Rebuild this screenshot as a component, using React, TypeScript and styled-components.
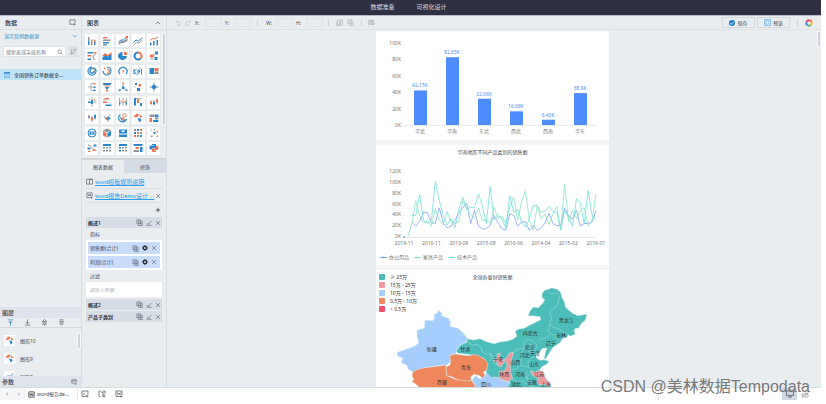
import React, { useState } from "react";
import styled, { createGlobalStyle } from "styled-components";

const BLUE = "#2b86cc";
const ORANGE = "#ee7553";
const GREY = "#8d949b";
const INK = "#5b606b";

const GlobalStyle = createGlobalStyle`
  * { box-sizing: border-box; }
  body {
    margin: 0;
    background: #fff;
    color: #444a54;
    font: 5px/8px "Noto Sans", "Noto Sans CJK SC", sans-serif;
  }
  button, input { font: inherit; color: inherit; }
  button { border: 0; padding: 0; background: none; cursor: pointer; }
  ul, h2, h3, figure { margin: 0; padding: 0; list-style: none; font-size: inherit; font-weight: 400; }
  svg { flex: none; }
`;

const Shell = styled.div`
  position: relative;
  display: flex;
  flex-direction: column;
  height: 100vh;
  margin-right: 5px;
`;

const TopNav = styled.nav`
  display: flex;
  justify-content: center;
  gap: 22px;
  flex: 0 0 15px;
  background: #2f3142;
  padding-right: 4px;
`;

const TopLink = styled.a`
  color: #d9dae2;
  font-size: 6px;
  line-height: 15px;
  text-decoration: none;
`;

const Body = styled.div`
  display: flex;
  flex: 1;
  min-height: 0;
  background: #e9edf0;
`;

const Side = styled.aside<{ $width: number }>`
  position: relative;
  display: flex;
  flex-direction: column;
  flex: 0 0 ${(p) => p.$width}px;
  min-width: 0;
  border-right: 1px solid #dadfe5;
  border-top: 1px solid #b9bac6;
`;

const PanelHead = styled.header`
  display: flex;
  align-items: center;
  justify-content: space-between;
  flex: 0 0 14px;
  padding: 0 5px;
  border-bottom: 1px solid #dadfe5;
  color: #33373f;
`;

const PanelTitle = styled.h2`
  font-size: 6px;
  line-height: 8px;
  font-weight: 500;
`;

const SourceButton = styled.button`
  display: flex;
  align-items: center;
  justify-content: space-between;
  height: 12px;
  padding: 0 3px 0 4px;
  color: #2f8fc9;
`;

const SearchRow = styled.div`
  display: flex;
  gap: 2px;
  margin: 4px 3px 0;
  height: 11px;
`;

const SearchBox = styled.label`
  display: flex;
  align-items: center;
  flex: 1;
  min-width: 0;
  padding: 0 2px;
  background: #fff;
  border: 1px solid #e0e4e8;
`;

const SearchInput = styled.input`
  flex: 1;
  width: 0;
  padding: 0;
  border: 0;
  outline: 0;
  background: none;
  &::placeholder { color: #6d727b; opacity: 1; }
`;

const IconButton = styled.button<{ $w?: number; $h?: number; $bg?: string; $tone?: string }>`
  display: flex;
  align-items: center;
  justify-content: center;
  flex: none;
  width: ${(p) => p.$w ?? 8}px;
  height: ${(p) => p.$h ?? 8}px;
  background: ${(p) => p.$bg ?? "none"};
  color: ${(p) => p.$tone ?? INK};
`;

const TreeItem = styled.button`
  display: flex;
  align-items: center;
  gap: 4px;
  height: 11px;
  margin-top: 12px;
  padding: 0 4px;
  background: #bfe3f8;
  color: #262b33;
  white-space: nowrap;
`;

const Spacer = styled.div`
  flex: 1;
`;

const SubHead = styled.header`
  display: flex;
  align-items: center;
  justify-content: space-between;
  flex: 0 0 11px;
  padding: 0 3px 0 2px;
  background: #dfe3eb;
`;

const LayerTools = styled.div`
  display: flex;
  align-items: center;
  flex: 0 0 10px;
  gap: 9px;
  padding: 0 6px;
  border-bottom: 1px solid #d3d9e0;
`;

const LayerList = styled.ul`
  display: flex;
  flex-direction: column;
  gap: 7px;
  height: 48px;
  padding: 7px 4px 0;
  overflow: hidden;
`;

const LayerItem = styled.li`
  display: flex;
  align-items: center;
  flex: 0 0 11px;
  gap: 5px;
`;

const LayerThumb = styled.span`
  display: flex;
  align-items: center;
  justify-content: center;
  width: 11px;
  height: 11px;
  background: #fff;
`;

const ScrollThumb = styled.span<{ $top?: number; $bottom?: number; $height: number }>`
  position: absolute;
  right: 1px;
  ${(p) => (p.$bottom !== undefined ? `bottom: ${p.$bottom}px;` : `top: ${p.$top}px;`)}
  width: 2px;
  height: ${(p) => p.$height}px;
  background: #cfd2d6;
  outline: 1px solid #f6f7f8;
`;

const ChartGrid = styled.div`
  display: grid;
  grid-template-columns: repeat(5, 13px);
  grid-auto-rows: 13px;
  justify-content: space-between;
  align-content: space-between;
  height: 121px;
  margin: 4px 6px 3px 3px;
`;

const ChartTile = styled.button`
  display: flex;
  align-items: center;
  justify-content: center;
  background: #fff;
`;

const Tabs = styled.div`
  display: grid;
  grid-template-columns: 1fr 1fr;
  flex: 0 0 15px;
  border-top: 2px solid #d3d4d5;
`;

const Tab = styled.button<{ $active: boolean }>`
  background: ${(p) => (p.$active ? "#e9edf0" : "#d5dce4")};
`;

const Fields = styled.div`
  display: flex;
  flex-direction: column;
  padding: 2px 4px 0;
`;

const LinkRow = styled.div`
  display: flex;
  align-items: center;
  gap: 2px;
  height: 14px;
  border-bottom: 1px solid #d9dee3;
`;

const DocLink = styled.a`
  flex: 1;
  min-width: 0;
  color: #2f9ce8;
  font-family: Roboto, "Noto Sans CJK SC", sans-serif;
  font-size: 6px;
  white-space: nowrap;
`;

const AddRow = styled.div`
  display: flex;
  justify-content: flex-end;
  align-items: center;
  height: 14px;
`;

const GroupHead = styled.div`
  display: flex;
  align-items: center;
  height: 11px;
  padding-left: 2px;
  background: #d7dde5;
  color: #33373f;
  font-weight: 600;
  & + & { margin-top: 1px; }
`;

const GroupName = styled.span`
  flex: 1;
`;

const FieldLabel = styled.div`
  height: 12px;
  padding-left: 4px;
  line-height: 12px;
`;

const FieldBox = styled.div`
  display: flex;
  flex-direction: column;
  gap: 2px;
  padding: 2px;
  background: #fff;
`;

const FieldChip = styled.div`
  display: flex;
  align-items: center;
  height: 12px;
  padding: 0 2px;
  background: #c9dcfb;
`;

const FilterInput = styled.input`
  width: 100%;
  height: 15px;
  margin-bottom: 2px;
  padding: 0 3px;
  border: 0;
  background: #fff;
  &::placeholder { color: #b4b8bf; opacity: 1; font-style: italic; }
`;

const Workspace = styled.section`
  display: flex;
  flex-direction: column;
  flex: 1;
  min-width: 0;
  border-top: 1px solid #b9bac6;
`;

const Toolbar = styled.div`
  display: flex;
  align-items: center;
  flex: 0 0 14px;
  padding: 0 8px 0 5px;
  border-bottom: 1px solid #dde2e6;
`;

const SizeField = styled.label`
  display: flex;
  align-items: center;
  justify-content: space-between;
  width: 27px;
  margin-left: 3px;
`;

const SizeInput = styled.input`
  width: 17px;
  height: 9px;
  padding: 0;
  border: 1px solid #e0e4e8;
  background: none;
`;

const Divider = styled.span<{ $gap: number }>`
  width: 1px;
  height: 6px;
  margin: 0 ${(p) => p.$gap}px;
  background: #cfd4da;
`;

const ActionButton = styled.button`
  display: flex;
  align-items: center;
  justify-content: center;
  gap: 2px;
  width: 33px;
  height: 11px;
  margin-left: 2px;
  border: 1px solid #d5dae0;
`;

const Canvas = styled.main`
  position: relative;
  display: flex;
  justify-content: center;
  flex: 1;
  min-height: 0;
  overflow: hidden;
  padding: 1px 3px 0 0;
`;

const Report = styled.div`
  display: flex;
  flex-direction: column;
  gap: 5px;
  width: 100%;
  max-width: 233px;
  height: max-content;
  background: #f2f4f6;
`;

const Card = styled.figure`
  position: relative;
  background: #fff;
`;

const CardTitle = styled.h3`
  padding-top: 3px;
  text-align: center;
  line-height: 8px;
`;

const Drawing = styled.svg`
  display: block;
  width: 100%;
`;

const SeriesLegend = styled.ul`
  display: flex;
  gap: 5px;
  height: 16px;
  padding: 4px 4px;
  color: #777;
`;

const SeriesItem = styled.li`
  display: flex;
  align-items: center;
  gap: 2px;
`;

const RangeLegend = styled.ul`
  position: absolute;
  top: 3px;
  left: 3px;
`;

const RangeItem = styled.li<{ $color: string }>`
  display: flex;
  align-items: center;
  gap: 5px;
  height: 8px;
  color: #333;
  &::before {
    content: "";
    width: 6px;
    height: 6px;
    border-radius: 1px;
    background: ${(p) => p.$color};
  }
`;

const Footer = styled.footer`
  display: flex;
  flex: 0 0 17px;
  padding: 0 8px 4px 0;
  border-top: 1px solid #d9dde2;
  background: #fff;
`;

const Pager = styled.div`
  display: flex;
  align-items: center;
  gap: 4px;
  width: 26px;
  padding-left: 3px;
  background: #f5f6f7;
`;

const SheetTab = styled.button`
  display: flex;
  align-items: center;
  gap: 2px;
  width: 52px;
  padding-left: 2px;
  border-right: 1px solid #e2e5e9;
  white-space: nowrap;
`;

const SheetTools = styled.div`
  display: flex;
  align-items: center;
  flex: 1;
  gap: 9px;
  padding-left: 3px;
`;

const DeviceTools = styled.div`
  display: flex;
  justify-content: flex-end;
  width: 155px;
  border-left: 1px solid #e2e5e9;
`;

const Watermark = styled.div`
  position: absolute;
  right: 11px;
  bottom: 7px;
  color: rgba(105, 105, 105, 0.9);
  font: 16px/20px "Liberation Sans", "Noto Sans CJK SC", sans-serif;
  white-space: nowrap;
  pointer-events: none;
`;

/* ---------- small line icons, 16-unit grid ---------- */

const linePaths = {
  addTable: "M2 2h12v7M2 2v10h7M12 9v6M9 12h6",
  down: "M2 5l6 6 6-6",
  up: "M2 11l6-6 6 6",
  search: "M7 2a5 5 0 1 0 0 10a5 5 0 1 0 0-10M11 11l4 4",
  sort: "M4 2v12M1 11l3 3 3-3M8 3h7M8 7h5M8 11h3",
  toTop: "M2 2h12M8 15V5M4 9l4-4 4 4",
  toBottom: "M2 14h12M8 1v10M4 7l4 4 4-4",
  raise: "M8 1L3 6h10zM3 9h10M3 12h10M8 12v3",
  lower: "M3 2h10M3 6h10M4 9h8l-4 5z",
  params: "M14 9V2H2v9h7M2 5h12M12 10v5M9 13h6",
  book: "M8 3v11M8 3H1v11h14V3zM8 3h7",
  doc: "M2 2h12v8M2 2v11h7M5 5l1 4 2-3 2 3 1-4M12 10v5M10 13h5",
  close: "M3 3l10 10M13 3L3 13",
  plus: "M8 2v12M2 8h12",
  copy: "M2 2h8v3M2 2v9h4M6 5h8v10H6zM10 7v6M7 10h6",
  edit: "M3 8l3 4 8-9M1 14h14",
  undo: "M5 2L2 5l3 3M2 5h8a4 4 0 0 1 0 9H5",
  redo: "M11 2l3 3-3 3M14 5H6a4 4 0 0 0 0 9h5",
  pages: "M4 2h11v11H4zM1 5v10h11M7 5h5M7 8h5M7 10h5",
  align: "M2 1v14M5 3h7v3H5zM5 9h10v3H5z",
  prev: "M10 4L5 8l5 4z",
  next: "M6 4l5 4-5 4z",
  word: "M2 2h12v12H2zM4 5l2 6 2-5 2 5 2-6",
  addSheet: "M14 8V2H2v11h7M4 8h4M12 9v6M9 12h6",
  copySheet: "M5 2H2v11h3M10 2h4v6M6 4h4v9M12 9v6M9 12h6",
  desktop: "M1 2h14v9H1zM8 11v3M4 14h8",
  blocks: "M8 2h6v5H8zM2 8h4v6H2zM8 9h6v5H8z",
};

function Line({ name, size = 6, weight = 1.6, fill = "none" }: { name: keyof typeof linePaths; size?: number; weight?: number; fill?: string }) {
  return (
    <svg width={size} height={size} viewBox="0 0 16 16" fill={fill} stroke="currentColor" strokeWidth={weight} aria-hidden="true">
      <path d={linePaths[name]} />
    </svg>
  );
}

const Gear = () => (
  <svg width="6" height="6" viewBox="0 0 16 16" aria-hidden="true">
    <circle cx="8" cy="8" r="4.5" fill="none" stroke="#30343c" strokeWidth="4" />
    <path d="M8 0v3M8 13v3M0 8h3M13 8h3M2.500 2.500l2 2M11.500 11.500l2 2M13.500 2.500l-2 2M4.500 11.500l-2 2" stroke="#30343c" strokeWidth="2" />
  </svg>
);

/* ---------- chart type icons, 20-unit grid ---------- */

type Shape = [color: string, d: string, stroke?: number];

const Globe: Shape[] = [
  ["#d9dcdf", "M10 1a9 9 0 1 0 0 18a9 9 0 1 0 0-18", 1],
  [ORANGE, "M3 5l5-4 4 2-2 4-4 2-4-1zM13 3l5 4-2 3-3-2z"],
  [BLUE, "M9 10l6 1 2 3-4 5-2-4z"],
];

const chartTypes: [string, Shape[]][] = [
  ["堆积柱图", [[GREY, "M2 2h3v7H2zM8 7h3v4H8z"], [ORANGE, "M8 11h3v7H8zM14 7h3v5h-3z"], [BLUE, "M2 9h3v9H2zM14 12h3v6h-3z"]]],
  ["条形图", [[ORANGE, "M2 2h9v3H2z"], [GREY, "M2 7h15v3H2zM2 16h8v3H2z"], [BLUE, "M2 12h12v3H2z"]]],
  ["面积折线图", [[GREY, "M1 14l5-4h5l8-5v5l-8 4H6l-5 4z"], [BLUE, "M1 12l5-4h5l7-6", 2], [ORANGE, "M15 0h5v5h-5z"]]],
  ["折线图", [[BLUE, "M1 13l5-5 5 2 8-7", 2], [GREY, "M1 18l6-5 5 1 7-6", 2]]],
  ["组合图", [[ORANGE, "M2 9l5-4 5 1 6-4", 2], [BLUE, "M2 13h3v6H2zM8 10h3v9H8zM15 8h3v11h-3z"]]],
  ["进度条图", [[BLUE, "M1 2h11v3H1zM1 15h7v3H1z"], [ORANGE, "M13 2h6v3h-6zM1 8h8v3H1z"], [GREY, "M17 6l-5 5 3 7", 2]]],
  ["面积图", [[ORANGE, "M1 9l5-5 6 4 7-6v8H1z"], [BLUE, "M1 12l6-3 5 2 7-4v11H1z"]]],
  ["饼图", [[BLUE, "M9 2v8h9a9 8 0 1 1-9-8z"], [ORANGE, "M12 1a8 8 0 0 1 7 7h-7z"]]],
  ["环形图", [[BLUE, "M10 3a7 7 0 1 0 5 12", 4], [ORANGE, "M10 3a7 7 0 0 1 5 12", 4]]],
  ["和弦图", [[BLUE, "M12 1h6v6h-6zM11 12h6v6h-6z"], [ORANGE, "M2 7h7v6H2z"], [GREY, "M8 9l6-5M9 11l5 4M3 16h5", 2]]],
  ["玫瑰图", [[BLUE, "M10 2a8 8 0 1 0 8 8a6 6 0 0 0-12 0a4 4 0 0 0 8 0", 2.5], [GREY, "M9 4a7 7 0 0 1 5 11", 2]]],
  ["径向图", [[BLUE, "M10 2a8 8 0 1 1-8 8", 2.4], [ORANGE, "M10 6a4 4 0 0 1 0 9M4 4l3 2", 2.4]]],
  ["仪表盘", [[BLUE, "M4 16a8 8 0 1 1 12 0", 2.4], [ORANGE, "M9 13l3-5", 2.4]]],
  ["指标图", [[BLUE, "M2 6v11M7 6l-5 5 5 6M10 17V8h3v4h-3M17 6v11", 2], [ORANGE, "M12 3l3 2", 2]]],
  ["矩形树图", [[BLUE, "M1 4h9v12H1z"], [ORANGE, "M11 4h8v6h-8z"], [GREY, "M11 11h8v5h-8z"]]],
  ["树图", [[GREY, "M2 10h6M8 3v14M8 3h7M8 17h7M8 10h7", 1.4], [ORANGE, "M13 2h4v3h-4z"], [BLUE, "M13 9h4v3h-4zM13 15h4v3h-4z"]]],
  ["漏斗图", [[BLUE, "M1 2h18l-2 4H3zM6 10h8l-2 4H8z"], [ORANGE, "M4 7h12l-1 2H5zM8 15h4v4H8z"]]],
  ["关系图", [[GREY, "M10 3v9M10 12l-7 5M10 12l7 5", 1.4], [BLUE, "M8 9h5v5H8zM1 15h4v3H1zM15 15h4v3h-4z"], [ORANGE, "M9 1h3v3H9z"]]],
  ["散点图", [[ORANGE, "M11 4h5v5h-5z"], [BLUE, "M4 2h4v4H4zM8 12h6v6H8z"], [GREY, "M3 9h2v2H3z"]]],
  ["旭日图", [[BLUE, "M10 4l6 6-6 6-6-6z"], [GREY, "M10 1v3M10 16v3M1 10h3M16 10h3", 2]]],
  ["风向图", [[BLUE, "M8 6h4v8H8zM2 9h6v3H2z"], [GREY, "M10 1v4M10 15v4M13 10h6M4 4h2", 2], [ORANGE, "M13 4h3v3h-3z"]]],
  ["甘特图", [[ORANGE, "M5 2h9v3H5zM2 9h8v3H2z"], [BLUE, "M7 15h12v3H7z"], [GREY, "M2 5h4v2H2z"]]],
  ["平行坐标", [[GREY, "M3 2v16M10 2v16M17 2v16", 1.6], [ORANGE, "M3 7l7 4 7-3", 1.6], [BLUE, "M2 11h3v4H2zM15 10h3v5h-3z"]]],
  ["瀑布图", [[BLUE, "M2 2h4v15H2zM14 12h4v6h-4z"], [ORANGE, "M8 4h4v8H8z"], [GREY, "M6 3h11", 1.4]]],
  ["K线图", [[GREY, "M4 6v10M10 5v13M16 2v12", 1.4], [ORANGE, "M2 9h4v5H2zM14 5h4v6h-4z"], [BLUE, "M8 9h4v6H8z"]]],
  ["箱线图", [[GREY, "M4 3v9M10 6v12M16 2v12", 1.4], [ORANGE, "M8 8h4v7H8z"], [BLUE, "M14 4h4v7h-4z"], [GREY, "M2 5h4v5H2z"]]],
  ["地图热力", [[BLUE, "M2 5l7 5 3-3 6 4-8 4z"], [GREY, "M17 2l-7 8 3 8", 1.6], [ORANGE, "M8 9h3v3H8z"]]],
  ["标记地图", [[BLUE, "M5 3a8 8 0 1 0 12 9M6 8a5 5 0 0 0 8 5", 2.4], [ORANGE, "M13 1a3 3 0 1 0 0 7a3 3 0 1 0 0-7M8 10h4v4H8z", 1.8]]],
  ["区域地图", Globe],
  ["表格树", [[GREY, "M1 3h10v5H1zM12 9h7v4h-7z"], [ORANGE, "M1 10h5v8H1z"], [BLUE, "M12 3h7v5h-7zM8 14h11v4H8z"]]],
  ["词云", [[BLUE, "M10 2a8 8 0 1 0 0 16a8 8 0 1 0 0-16M4 8h12M4 12h12M7 8v5M12 8v5", 2]]],
  ["立方体", [[GREY, "M2 5l8-4 8 4-8 4z"], [ORANGE, "M2 6l7 4v9l-7-4z"], [BLUE, "M18 6l-7 4v9l7-4z"]]],
  ["卡片图", [[BLUE, "M2 3h16v8H2zM2 13h16v5H2z"], ["#ffffff", "M7 5h6v3H7z"]]],
  ["矩阵图", [[GREY, "M2 2h4v4H2zM14 8h4v4h-4zM8 14h4v4H8z"], [BLUE, "M8 2h4v4H8zM2 8h4v4H2zM14 14h4v4h-4z"], [ORANGE, "M14 2h4v4h-4zM8 8h4v4H8zM2 14h4v4H2z"]]],
  ["力导图", [[BLUE, "M9 8h4v4H9zM3 3h2v2H3z"], [GREY, "M4 15h3v3H4zM10 2h2v3h-2z"], [ORANGE, "M15 6h3v3h-3zM15 15h3v3h-3z"]]],
  ["桑基图", [[GREY, "M2 4c8 0 8 10 17 11", 2], [BLUE, "M1 9h6v4H1zM13 3h6v4h-6z"], [ORANGE, "M2 16h5v2H2zM11 13h5v3h-5z"]]],
  ["明细表", [[BLUE, "M2 2h16v4H2z"], [GREY, "M2 8h4v3H2zM8 8h4v3H8zM14 8h4v3h-4zM2 14h4v3H2zM8 14h4v3H8zM14 14h4v3h-4z"]]],
  ["汇总表", [[BLUE, "M2 2h16v4H2zM2 8h4v3H2zM2 14h4v3H2z"], [GREY, "M8 8h4v3H8zM14 8h4v3h-4zM8 14h4v3H8zM14 14h4v3h-4z"]]],
  ["透视表", [[BLUE, "M1 2h18v4H1zM14 8h5v10h-5z"], [ORANGE, "M5 8h7v4H5z"], [GREY, "M1 14h11v4H1z"]]],
  ["Python", [[BLUE, "M6 2h7l1 1v6l-1 1H8l-2 3H3l-2-2V7l2-2h7V4H6z"], [ORANGE, "M14 18H7l-1-1v-5l1-1h5l2-3V6h3l2 2v4l-2 2h-7v1h4z"]]],
];

function Glyph({ shapes, size = 10 }: { shapes: Shape[]; size?: number }) {
  return (
    <svg width={size} height={size} viewBox="0 0 20 20" aria-hidden="true">
      {shapes.map(([color, d, stroke], i) => (
        <path key={i} d={d} fill={stroke ? "none" : color} stroke={stroke ? color : "none"} strokeWidth={stroke} />
      ))}
    </svg>
  );
}

/* ---------- report charts ---------- */

const regions: [string, number, string][] = [
  ["华北", 42.15, "42.15K"],
  ["华南", 82.65, "82.65K"],
  ["东北", 32.06, "32.06K"],
  ["西北", 16.68, "16.68K"],
  ["西南", 6.43, "6.43K"],
  ["华东", 38.9, "38.9K"],
];

function BarChart() {
  const base = 94;
  const scale = 0.82;
  return (
    <Drawing viewBox="0 0 233 109" role="img" aria-label="各地区销售额" fontSize="5">
      {[0, 20, 40, 60, 80, 100].map((v) => (
        <text key={v} x="25" y={base + 2 - v * scale} textAnchor="end" fill="#777">{v}K</text>
      ))}
      <path d={`M28 ${base + 0.5}h192`} stroke="#e8e8e8" />
      {regions.map(([name, value, label], i) => {
        const x = 44 + i * 32;
        return (
          <g key={name} textAnchor="middle">
            <rect x={x - 6} y={base - value * scale} width="13" height={value * scale} fill="#4e8cff" />
            <text x={x} y={base - value * scale - 3} fill="#4e8cff">{label}</text>
            <text x={x} y={base + 8} fill="#777">{name}</text>
          </g>
        );
      })}
    </Drawing>
  );
}

const series = [
  { name: "办公用品", color: "#7da2fb", start: 2, data: [28,20,29,46,45,26,25,54,26,17,20,31,44,54,63,25,49,20,15,15,22,40,26,15,13,43,40,20,28,28,12,22,12,17,26,44,25,21,22,53,39,33,50,20,25,25,28,49] },
  { name: "家具产品", color: "#8ce3c2", start: 1, data: [1,25,67,40,26,30,20,52,31,23,47,28,25,28,67,52,42,36,54,31,31,25,55,34,39,25,55,74,31,65,86,31,13,58,33,43,23,43,56,13,98,28,49,34,49,54,20,31,80] },
  { name: "技术产品", color: "#70dfdb", start: 2, data: [40,40,79,31,25,31,103,68,40,22,34,17,52,74,52,55,54,80,58,25,93,32,40,34,17,76,46,51,28,18,34,59,58,45,48,57,47,46,13,48,37,20,71,63,25,86,40,32] },
];

const months = ["2019-11", "2016-11", "2013-09", "2015-08", "2016-06", "2014-04", "2015-02", "2016-01"];

function LineChart() {
  const base = 81;
  const scale = 0.54;
  const step = 192 / 49;
  return (
    <Drawing viewBox="0 0 233 93" role="img" aria-label="销售额走势" fontSize="5">
      {[0, 20, 40, 60, 80, 100, 120].map((v) => (
        <text key={v} x="25" y={base + 1 - v * scale} textAnchor="end" fill="#777">{v}K</text>
      ))}
      <path d={`M28 ${base + 0.5}h192`} stroke="#e8e8e8" />
      <circle cx="28" cy={base} r="1" fill="#7da2fb" />
      {months.map((m, i) => (
        <text key={m} x={28 + i * 27.4} y={base + 8} textAnchor="middle" fill="#777">{m}</text>
      ))}
      {series.map((s) => (
        <polyline
          key={s.name}
          fill="none"
          stroke={s.color}
          strokeWidth="0.8"
          strokeLinejoin="round"
          points={s.data.map((v, i) => `${28 + (i + s.start) * step},${base - v * scale}`).join(" ")}
        />
      ))}
    </Drawing>
  );
}

const ranges: [string, string][] = [
  ["≥ 25万", "#4dbdb9"],
  ["15万 - 25万", "#ec9a9e"],
  ["10万 - 15万", "#a5cdfd"],
  ["0.5万 - 10万", "#f0875c"],
  ["< 0.5万", "#f4516c"],
];

const provinces: [string, string][] = [
  ["#4dbdb9", "292,221 310,225 330,221 350,230 372,236 390,231 412,228 430,222 440,214 436,198 446,192 462,190 480,180 500,170 512,165 510,155 494,153 474,152 480,138 490,126 505,128 518,115 524,104 516,98 516,86 524,76 545,69 560,72 572,82 576,98 584,112 586,126 606,144 624,152 636,150 651,147 646,166 632,178 626,190 616,190 612,198 616,208 600,214 596,209 590,218 580,218 572,230 560,240 550,246 540,260 528,280 522,283 526,262 531,250 518,250 508,262 498,268 500,280 512,286 522,284 536,288 532,296 518,304 508,314 520,320 528,340 542,358 541,380 396,380 420,352 405,345 385,340 360,342 348,325 352,295 340,280 320,272 290,268 265,265 258,258 270,240 290,232"],
  ["#a5cdfd", "82,262 104,254 136,243 146,232 141,214 141,195 163,190 165,165 188,167 194,158 192,148 202,144 206,135 216,146 214,152 236,160 242,172 240,184 264,190 280,204 292,220 288,232 270,240 258,256 258,266 240,270 242,288 232,300 200,302 165,308 130,322 114,312 110,300 94,294 98,280 82,272"],
  ["#f0875c", "128,320 146,312 165,308 200,304 228,300 230,332 260,344 290,344 304,346 316,360 318,380 170,380 150,370 138,358 126,350 132,342 126,334"],
  ["#f0875c", "238,272 255,267 270,269 296,272 316,268 330,274 346,284 354,296 350,315 340,322 346,332 338,341 330,332 312,328 302,336 304,346 288,348 262,344 246,335 230,332 228,306 240,300 242,286"],
  ["#a5cdfd", "306,345 316,332 330,342 340,338 350,324 364,338 374,336 386,338 404,348 420,352 416,362 400,370 396,380 322,380 314,360"],
  ["#ec9a9e", "383,265 391,265 388,278 402,284 402,292 392,306 382,300 380,290 370,288 380,278"],
  ["#ec9a9e", "418,264 431,262 424,284 421,305 422,325 428,340 412,350 396,344 386,338 388,318 404,318 412,300 402,284 410,278"],
  ["#ec9a9e", "480,318 494,322 506,316 520,320 522,330 528,342 541,356 536,366 524,358 508,360 500,350 506,340 490,334"],
];

const borders = [
  "530,78 544,86 562,84 568,94 564,116 552,130 540,136 544,160 540,178 552,188 570,192 586,206 600,212",
  "540,178 532,196 544,208 556,210 560,222 576,226",
  "540,206 528,220 512,222 502,228",
  "502,250 498,236 486,226 472,224 460,232 462,250 444,252 428,262",
  "480,238 490,242 496,256 490,262 478,260 474,248 480,238",
  "458,254 456,276 450,296 440,310 424,314",
  "498,270 486,278 474,290 476,306 488,318",
  "450,300 464,304 476,306",
  "426,342 440,350 462,348 470,358 490,366",
  "470,318 468,334 476,350",
  "480,326 470,336 476,352",
  "294,232 308,240 322,238 334,248 338,262 354,270 360,264 364,276 360,290",
  "360,264 372,280 376,296 384,302",
];

const provinceNames: [string, number, number][] = [
  ["新疆", 185, 259], ["甘肃", 286, 257], ["青海", 287, 311], ["西藏", 216, 357], ["四川", 348, 364],
  ["内蒙古", 481, 210], ["黑龙江", 589, 170], ["吉林", 573, 217], ["辽宁", 542, 241], ["北京", 480, 253],
  ["天津", 495, 271], ["河北", 464, 276], ["宁夏", 385, 289], ["山西", 436, 298], ["山东", 493, 304],
  ["陕西", 403, 332], ["河南", 450, 332], ["江苏", 508, 333], ["湖北", 438, 362], ["安徽", 486, 357], ["上海", 527, 362],
];

function ProvinceMap() {
  return (
    <Drawing viewBox="18 48 699 360" role="img" aria-label="全国各省份销售额地图" fontSize="15">
      {provinces.map(([color, points]) => (
        <polygon key={points} points={points} fill={color} stroke="#d5ecec" strokeWidth="1.5" strokeLinejoin="round" />
      ))}
      {borders.map((points) => (
        <polyline key={points} points={points} fill="none" stroke="#a5dfdd" strokeWidth="1.5" strokeLinejoin="round" />
      ))}
      {provinceNames.map(([name, x, y]) => (
        <text key={name} x={x} y={y} textAnchor="middle" fill="#333">{name}</text>
      ))}
    </Drawing>
  );
}

/* ---------- page ---------- */

function RowActions({ gear = false }: { gear?: boolean }) {
  return (
    <>
      <IconButton $w={9} aria-label="复制"><Line name="copy" size={7} weight={1.4} /></IconButton>
      <IconButton $w={9} aria-label={gear ? "设置" : "编辑"}>{gear ? <Gear /> : <Line name="edit" />}</IconButton>
      <IconButton $w={9} aria-label="删除"><Line name="close" /></IconButton>
    </>
  );
}

export default function App() {
  const [tab, setTab] = useState(0);
  return (
    <>
      <GlobalStyle />
      <Shell>
        <TopNav>
          <TopLink href="#data">数据准备</TopLink>
          <TopLink href="#design">可视化设计</TopLink>
        </TopNav>
        <Body>
          <Side $width={82}>
            <PanelHead>
              <PanelTitle>数据</PanelTitle>
              <IconButton aria-label="添加数据"><Line name="addTable" size={7} /></IconButton>
            </PanelHead>
            <SourceButton>演示案例数据源<Line name="down" size={6} /></SourceButton>
            <SearchRow>
              <SearchBox>
                <SearchInput aria-label="搜索" placeholder="搜索表或字段名称" />
                <Line name="search" weight={1.2} />
              </SearchBox>
              <IconButton $w={10} $h={11} $bg="#dfe3e7" $tone="#8a909a" aria-label="排序"><Line name="sort" size={7} /></IconButton>
            </SearchRow>
            <TreeItem>
              <svg width="6" height="6" viewBox="0 0 12 12" aria-hidden="true">
                <path d="M0 0h12v12H0z" fill="#7cbcec" />
                <path d="M0 0h12v3H0z" fill="#3c91d2" />
                <path d="M4 3v9M8 3v9M0 7h12" stroke="#cfe8fa" />
              </svg>
              全国销售订单数据全...
            </TreeItem>
            <Spacer />
            <SubHead>
              <PanelTitle>图层</PanelTitle>
            </SubHead>
            <LayerTools>
              <IconButton $tone="#2f7fae" aria-label="置顶"><Line name="toTop" size={7} /></IconButton>
              <IconButton aria-label="置底"><Line name="toBottom" size={7} /></IconButton>
              <IconButton aria-label="上移"><Line name="raise" size={7} /></IconButton>
              <IconButton aria-label="下移"><Line name="lower" size={7} /></IconButton>
            </LayerTools>
            <LayerList>
              {["图形10", "图形9", "图形8"].map((name, i) => (
                <LayerItem key={name}>
                  <LayerThumb><Glyph shapes={i < 2 ? Globe : chartTypes[3][1]} size={9} /></LayerThumb>
                  {name}
                </LayerItem>
              ))}
            </LayerList>
            <SubHead>
              <PanelTitle>参数</PanelTitle>
              <IconButton aria-label="添加参数"><Line name="params" /></IconButton>
            </SubHead>
            <ScrollThumb $bottom={39} $height={14} />
          </Side>

          <Side $width={85}>
            <PanelHead>
              <PanelTitle>图表</PanelTitle>
              <IconButton $w={6} aria-label="收起"><Line name="up" size={6} weight={2} /></IconButton>
            </PanelHead>
            <ChartGrid>
              {chartTypes.map(([name, shapes]) => (
                <ChartTile key={name} aria-label={name}><Glyph shapes={shapes} /></ChartTile>
              ))}
            </ChartGrid>
            <ScrollThumb $top={18} $height={90} />
            <Tabs role="tablist">
              {["图表数据", "修饰"].map((name, i) => (
                <Tab key={name} role="tab" aria-selected={tab === i} $active={tab === i} onClick={() => setTab(i)}>{name}</Tab>
              ))}
            </Tabs>
            <Fields>
              <LinkRow>
                <Line name="book" size={7} weight={1.4} />
                <DocLink href="#rules">word模板规则说明</DocLink>
              </LinkRow>
              <LinkRow>
                <Line name="doc" size={7} weight={1.4} />
                <DocLink href="#demo">word报告Demo设计 ...</DocLink>
                <IconButton aria-label="移除"><Line name="close" /></IconButton>
              </LinkRow>
              <AddRow>
                <IconButton $tone="#33373f" aria-label="添加"><Line name="plus" weight={2} /></IconButton>
              </AddRow>
              <GroupHead><GroupName>概述1</GroupName><RowActions /></GroupHead>
              <FieldLabel>指标</FieldLabel>
              <FieldBox>
                <FieldChip><GroupName>销售额(合计)</GroupName><RowActions gear /></FieldChip>
                <FieldChip><GroupName>利润(合计)</GroupName><RowActions gear /></FieldChip>
              </FieldBox>
              <FieldLabel as="label" htmlFor="filter">过滤</FieldLabel>
              <FilterInput id="filter" placeholder="请拖入数据" />
              <GroupHead><GroupName>概述2</GroupName><RowActions /></GroupHead>
              <GroupHead><GroupName>产品子类别</GroupName><RowActions /></GroupHead>
            </Fields>
          </Side>

          <Workspace>
            <Toolbar>
              <IconButton $w={11} $tone="#b7bcc6" aria-label="撤销"><Line name="undo" /></IconButton>
              <IconButton $w={9} $tone="#b7bcc6" aria-label="重做"><Line name="redo" /></IconButton>
              <SizeField>X:<SizeInput /></SizeField>
              <SizeField>Y:<SizeInput /></SizeField>
              <Divider $gap={5} />
              <SizeField>W:<SizeInput /></SizeField>
              <SizeField>H:<SizeInput /></SizeField>
              <Divider $gap={5} />
              <IconButton $w={11} $tone="#b0b5bd" aria-label="复制"><Line name="pages" size={7} /></IconButton>
              <IconButton $w={11} $tone="#b0b5bd" aria-label="粘贴"><Line name="copy" size={7} /></IconButton>
              <Divider $gap={5} />
              <IconButton $tone="#9da3ac" aria-label="对齐"><Line name="align" size={7} /></IconButton>
              <Spacer />
              <ActionButton>
                <svg width="6" height="6" viewBox="0 0 12 12" aria-hidden="true">
                  <circle cx="6" cy="6" r="6" fill="#1c7fc4" />
                  <path d="M3 6l2 3 4-5" fill="none" stroke="#fff" strokeWidth="1.5" />
                </svg>
                保存
              </ActionButton>
              <ActionButton>
                <svg width="7" height="7" viewBox="0 0 14 14" aria-hidden="true">
                  <path d="M1 1h12v12H1z" fill="#c8e2f7" stroke="#4a9bd8" />
                  <circle cx="7" cy="7" r="3" fill="#fff" stroke="#4a9bd8" />
                </svg>
                预览
              </ActionButton>
              <Divider $gap={7} />
              <svg width="8" height="8" viewBox="0 0 16 16" fill="none" strokeWidth="4" aria-label="主题">
                <path d="M8 2.500A5.500 5.500 0 0 1 13 6" stroke="#f26a3d" />
                <path d="M13 6A5.500 5.500 0 0 1 11 12.500" stroke="#f5b93a" />
                <path d="M11 12.500A5.500 5.500 0 0 1 5 12.500" stroke="#45b26b" />
                <path d="M5 12.500A5.500 5.500 0 0 1 3 6" stroke="#3e8ee0" />
                <path d="M3 6A5.500 5.500 0 0 1 8 2.500" stroke="#e0486a" />
              </svg>
            </Toolbar>
            <Canvas>
              <Report>
                <Card><BarChart /></Card>
                <Card>
                  <CardTitle>华南地区不同产品类别的销售额</CardTitle>
                  <LineChart />
                  <SeriesLegend>
                    {series.map((s) => (
                      <SeriesItem key={s.name}>
                        <svg width="7" height="3" viewBox="0 0 7 3" aria-hidden="true">
                          <path d="M0 1.500h7" stroke={s.color} />
                          <circle cx="3.500" cy="1.500" r="1" fill={s.color} />
                        </svg>
                        {s.name}
                      </SeriesItem>
                    ))}
                  </SeriesLegend>
                </Card>
                <Card>
                  <CardTitle>全国各省份销售额</CardTitle>
                  <RangeLegend>
                    {ranges.map(([label, color]) => (
                      <RangeItem key={label} $color={color}>{label}</RangeItem>
                    ))}
                  </RangeLegend>
                  <ProvinceMap />
                </Card>
              </Report>
              <ScrollThumb $top={2} $height={14} />
            </Canvas>
          </Workspace>
        </Body>
        <Footer>
          <Pager>
            <IconButton $tone="#c5c9cf" aria-label="上一页"><Line name="prev" fill="currentColor" /></IconButton>
            <IconButton $tone="#c5c9cf" aria-label="下一页"><Line name="next" fill="currentColor" /></IconButton>
          </Pager>
          <SheetTab><Line name="word" size={7} weight={2} />word报告de...</SheetTab>
          <SheetTools>
            <IconButton aria-label="新建页"><Line name="addSheet" size={8} /></IconButton>
            <IconButton aria-label="复制页"><Line name="copySheet" size={8} /></IconButton>
            <IconButton aria-label="新建文档"><Line name="doc" size={8} /></IconButton>
          </SheetTools>
          <DeviceTools>
            <IconButton $w={15} $h={12} $bg="#cfd7e3" aria-label="桌面"><Line name="desktop" size={8} /></IconButton>
            <IconButton $w={16} $h={12} $tone="#9ba0a8" aria-label="布局"><Line name="blocks" size={8} /></IconButton>
          </DeviceTools>
        </Footer>
        <Watermark>CSDN @美林数据Tempodata</Watermark>
      </Shell>
    </>
  );
}
